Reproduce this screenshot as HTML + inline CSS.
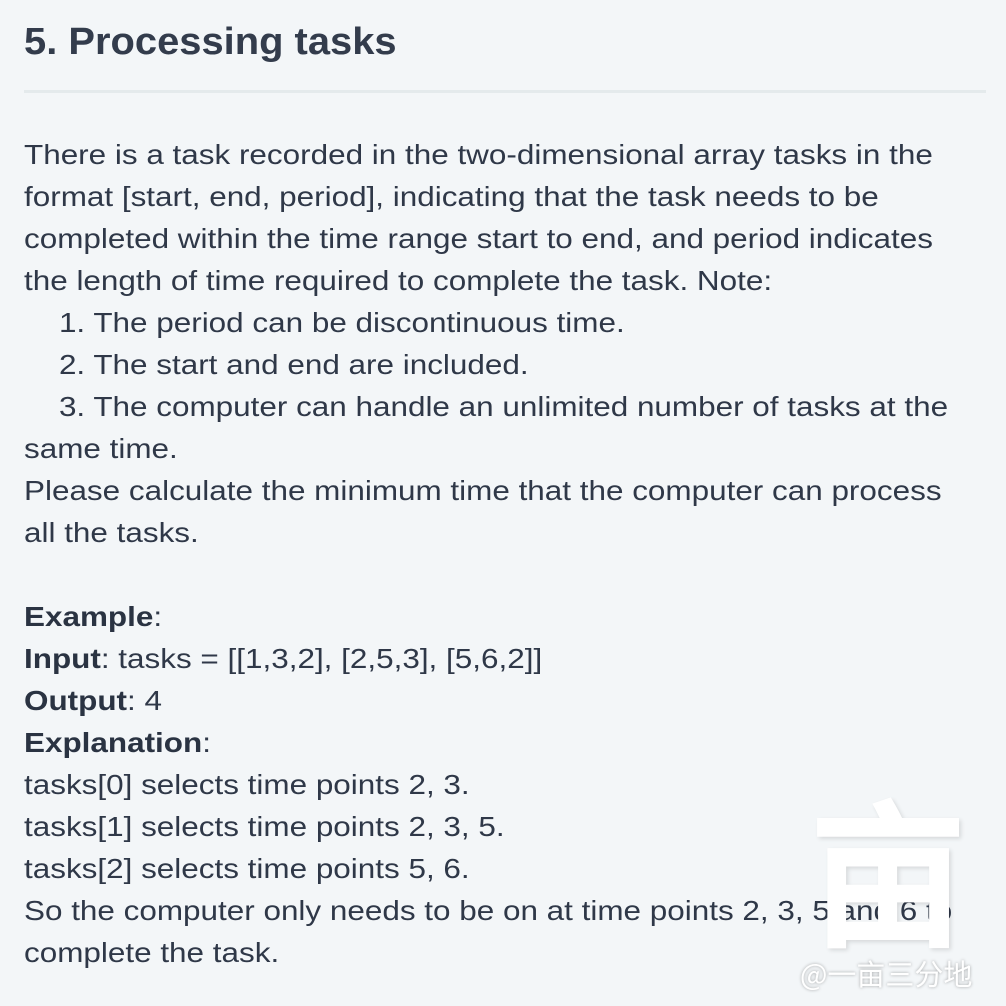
<!DOCTYPE html>
<html><head><style>
html,body{margin:0;padding:0;}
body{width:1006px;height:1006px;background:#f3f6f8;color:#2f3848;font-family:"Liberation Sans",sans-serif;position:relative;overflow:hidden;}
h1{position:absolute;left:24px;top:16px;margin:0;font-size:38px;font-weight:bold;line-height:52px;color:#333c4c;transform:scaleX(1.05);transform-origin:0 0;}
.rule{position:absolute;left:24px;top:90px;width:962px;height:3px;background:#e4eaec;}
.t{position:absolute;left:24px;top:134px;font-size:28px;line-height:42px;white-space:nowrap;transform:scaleX(1.123);transform-origin:0 0;}
.t div{height:42px;}
b{font-weight:bold;color:#2a3342;}
.wm{position:absolute;left:800px;top:952px;font-family:"Noto Sans CJK SC",sans-serif;font-size:29px;color:#fff;text-shadow:0 0 3px rgba(0,0,0,.35);}
.big{position:absolute;left:808px;top:785px;font-family:"Noto Sans CJK SC",sans-serif;font-weight:bold;font-size:160px;line-height:160px;color:#fff;text-shadow:2px 2px 4px rgba(0,0,0,.12);}
</style></head><body>
<h1>5. Processing tasks</h1>
<div class="rule"></div>
<div class="t">
<div>There is a task recorded in the two-dimensional array tasks in the</div>
<div>format [start, end, period], indicating that the task needs to be</div>
<div>completed within the time range start to end, and period indicates</div>
<div>the length of time required to complete the task. Note:</div>
<div>&nbsp;&nbsp;&nbsp;&nbsp;1. The period can be discontinuous time.</div>
<div>&nbsp;&nbsp;&nbsp;&nbsp;2. The start and end are included.</div>
<div>&nbsp;&nbsp;&nbsp;&nbsp;3. The computer can handle an unlimited number of tasks at the</div>
<div>same time.</div>
<div>Please calculate the minimum time that the computer can process</div>
<div>all the tasks.</div>
<div></div>
<div><b>Example</b>:</div>
<div><b>Input</b>: tasks = [[1,3,2], [2,5,3], [5,6,2]]</div>
<div><b>Output</b>: 4</div>
<div><b>Explanation</b>:</div>
<div>tasks[0] selects time points 2, 3.</div>
<div>tasks[1] selects time points 2, 3, 5.</div>
<div>tasks[2] selects time points 5, 6.</div>
<div>So the computer only needs to be on at time points 2, 3, 5 and 6 to</div>
<div>complete the task.</div>
</div>
<div class="big">亩</div>
<div class="wm">@一亩三分地</div>
</body></html>
